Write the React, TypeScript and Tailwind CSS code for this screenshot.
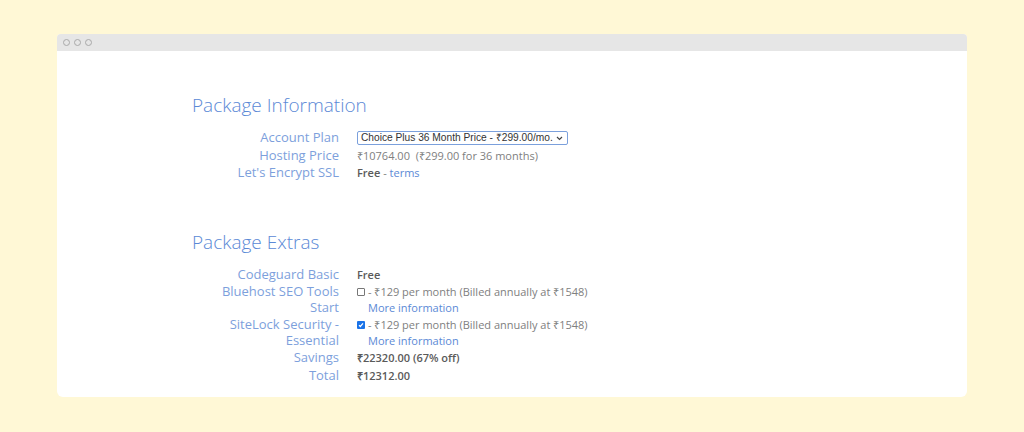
import type { ReactNode } from "react";

const font = { fontFamily: '"Open Sans", "Liberation Sans", sans-serif' };

function Row({ label, children }: { label: ReactNode; children: ReactNode }) {
  return (
    <div className="flex items-start py-px">
      <div className="w-[147px] shrink-0 text-right text-[13px] leading-[15.5px] text-[#7d9fdc]">
        {label}
      </div>
      <div className="ml-[18px] text-[11px] leading-[15.5px] text-[#808080]">
        {children}
      </div>
    </div>
  );
}

function Price() {
  return <span>- ₹129 per month (Billed annually at ₹1548)</span>;
}

export default function App() {
  return (
    <div className="h-[432px] w-[1024px] bg-[#fff8d6] pt-[34px] pl-[57px]" style={font}>
      <div className="h-[363px] w-[910px] overflow-hidden rounded-b-[6px] rounded-t-[4px] bg-white">
        <div className="flex h-[17px] items-center gap-[4px] bg-[#e6e6e6] pl-[6px]">
          <span className="h-[7px] w-[7px] rounded-full border border-[#a9a9a9]" />
          <span className="h-[7px] w-[7px] rounded-full border border-[#a9a9a9]" />
          <span className="h-[7px] w-[7px] rounded-full border border-[#a9a9a9]" />
        </div>

        <div className="pl-[135px] pt-[41px]">
          <h2 className="text-[19px] font-light leading-[26px] text-[#5b89d6]">
            Package Information
          </h2>
          <div className="mt-[11px]">
            <Row label="Account Plan">
              <div
                className="mt-px flex h-[14px] w-[211px] items-center justify-between overflow-hidden whitespace-nowrap rounded-[2px] border border-[#7ba0dc] pl-[3px] pr-[4px] text-[10.2px] leading-none text-[#333]"
                style={{ fontFamily: '"Liberation Sans", Arial, sans-serif' }}
              >
                <span>Choice Plus 36 Month Price - ₹299.00/mo.</span>
                <svg width="7" height="5" viewBox="0 0 7 5" className="shrink-0">
                  <path d="M1 1l2.5 2.5L6 1" fill="none" stroke="#444" strokeWidth="1.2" />
                </svg>
              </div>
            </Row>
            <Row label="Hosting Price">
              ₹10764.00&nbsp; (₹299.00 for 36 months)
            </Row>
            <Row label="Let's Encrypt SSL">
              <b className="font-semibold text-[#5a5a5a]">Free</b>{" "}
              - <span className="text-[#5b89d6]">terms</span>
            </Row>
          </div>

          <h2 className="mt-[47px] text-[19px] font-light leading-[26px] text-[#5b89d6]">
            Package Extras
          </h2>
          <div className="mt-[11px]">
            <Row label="Codeguard Basic">
              <b className="font-semibold text-[#5a5a5a]">Free</b>
            </Row>
            <Row label="Bluehost SEO Tools Start">
              <div className="flex items-center gap-[3px]">
                <span className="h-[8px] w-[8px] rounded-[1px] border border-[#777] bg-white" />
                <Price />
              </div>
              <div className="pl-[11px] text-[#5b89d6]">More information</div>
            </Row>
            <Row label="SiteLock Security - Essential">
              <div className="flex items-center gap-[3px]">
                <span className="flex h-[8px] w-[8px] items-center justify-center rounded-[1px] bg-[#1a73e8]">
                  <svg width="6" height="6" viewBox="0 0 6 6">
                    <path d="M1 3.2l1.3 1.3L5 1.4" fill="none" stroke="#fff" strokeWidth="1.2" />
                  </svg>
                </span>
                <Price />
              </div>
              <div className="pl-[11px] text-[#5b89d6]">More information</div>
            </Row>
            <Row label="Savings">
              <b className="font-semibold text-[#5a5a5a]">₹22320.00 (67% off)</b>
            </Row>
            <Row label="Total">
              <b className="font-semibold text-[#5a5a5a]">₹12312.00</b>
            </Row>
          </div>
        </div>
      </div>
    </div>
  );
}
